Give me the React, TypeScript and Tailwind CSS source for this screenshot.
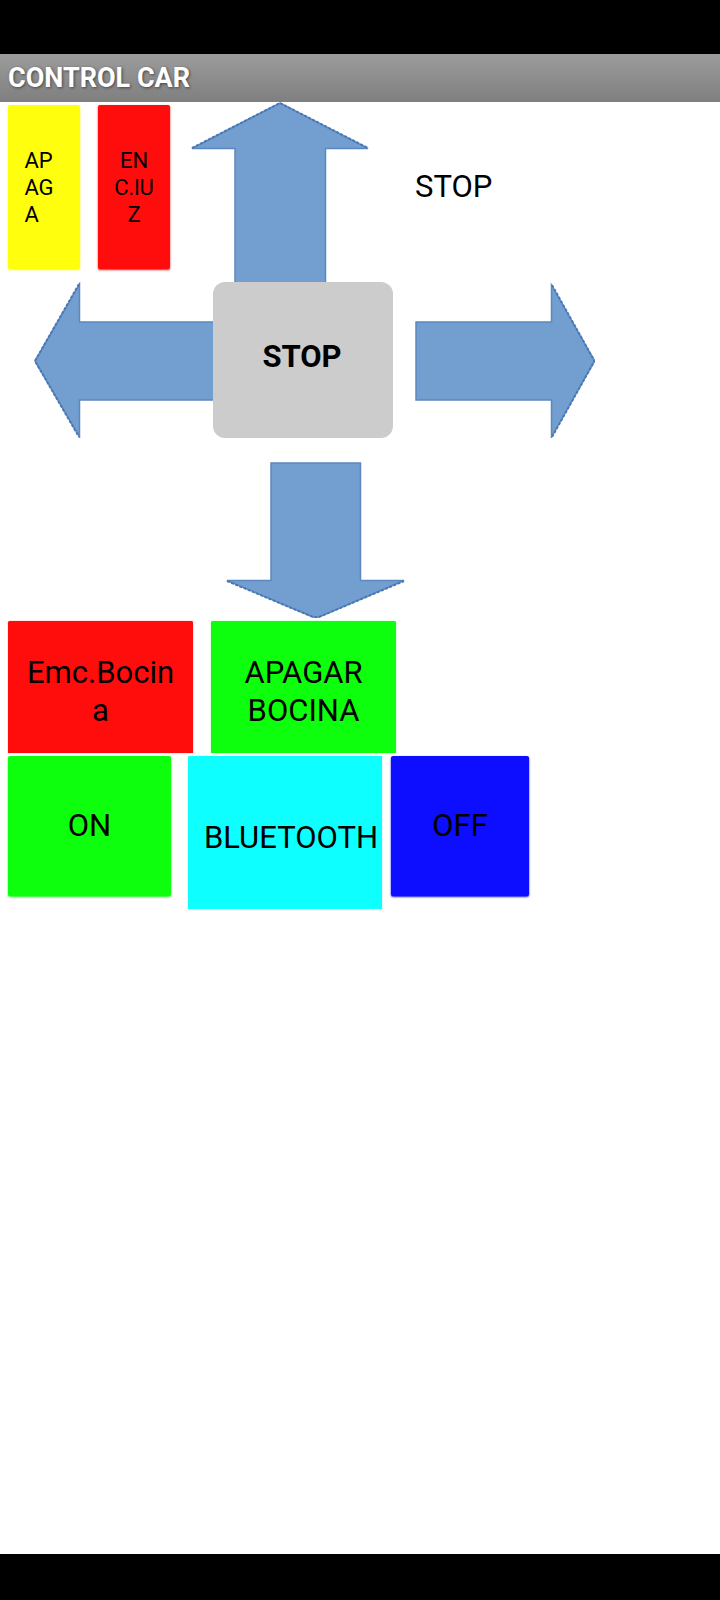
import type { ReactNode } from "react";

type ArrowProps = {
  label: string;
  viewBox: string;
  size: string;
  outline: string;
  tip: string;
};

function ArrowButton({ label, viewBox, size, outline, tip }: ArrowProps) {
  return (
    <button type="button" aria-label={label} className={`block shrink-0 ${size}`}>
      <svg viewBox={viewBox} className="block h-full w-full" fill="none">
        <path d={outline} fill="#729fcf" stroke="#5b88c0" strokeWidth="1.5" />
        <path d={tip} stroke="#4a78b5" strokeWidth="2" strokeDasharray="3 1.5" />
      </svg>
    </button>
  );
}

function ColorButton({ className, children }: { className: string; children: ReactNode }) {
  return (
    <button type="button" className={`flex shrink-0 items-center justify-center ${className}`}>
      <span>{children}</span>
    </button>
  );
}

export default function App() {
  return (
    <div className="flex min-h-screen flex-col bg-white font-[Roboto,sans-serif] text-black">
      <div className="h-[54px] bg-black" />
      <header className="flex h-12 items-center bg-linear-to-b from-[#9c9c9c] to-[#7f7f7f] px-2">
        <h1 className="text-[27px] leading-8 font-bold text-white [text-shadow:1px_1px_3px_#444]">
          CONTROL CAR
        </h1>
      </header>

      <main className="flex flex-1 flex-col items-start text-[31px] leading-[38px]">
        <div className="flex h-[180px] pl-2">
          <div className="flex gap-[18px] pt-[3px] text-[22px] leading-[27px]">
            <ColorButton className="h-[164px] w-[72px] rounded-xs bg-[#ffff0d] pr-2.5 text-left shadow-[0_1px_2px_#ffff0d]">
              AP
              <br />
              AG
              <br />A
            </ColorButton>
            <ColorButton className="h-[164px] w-[72px] rounded-xs bg-[#ff0d0d] shadow-[0_1px_2px_#ff0d0d]">
              EN
              <br />
              C.lU
              <br />Z
            </ColorButton>
          </div>
          <div className="pl-5">
            <ArrowButton
              label="Adelante"
              viewBox="0 0 180 180"
              size="h-[180px] w-[180px]"
              outline="M45 181V46.500H2L90 1L178 46.500H135.500V181"
              tip="M2 46L90 1L178 46"
            />
          </div>
          <p className="self-center pb-2.5 pl-[45px]">STOP</p>
        </div>

        <div className="flex h-[156px] pl-[33px]">
          <ArrowButton
            label="Izquierda"
            viewBox="0 0 180 156"
            size="h-[156px] w-[180px]"
            outline="M181 40H46.500V2L2 79L46.500 155V118H181"
            tip="M46 2L2 79L46 155"
          />
          <button
            type="button"
            className="w-[180px] shrink-0 rounded-xl bg-[#cccccc] pr-0.5 pb-1.5 font-bold"
          >
            STOP
          </button>
          <div className="pl-[22px]">
            <ArrowButton
              label="Derecha"
              viewBox="0 0 180 156"
              size="h-[156px] w-[180px]"
              outline="M1 40H136.500V3L179.500 79L136.500 155V118H1Z"
              tip="M137 3L179.500 79L137 155"
            />
          </div>
        </div>

        <div className="pt-6 pl-[225px]">
          <ArrowButton
            label="Atrás"
            viewBox="0 0 180 156"
            size="h-[156px] w-[180px]"
            outline="M46 1V118.500H2L88 155H94L179 118.500H135.500V1Z"
            tip="M2 119L88 155H94L179 119"
          />
        </div>

        <div className="flex h-[135px] gap-[18px] pt-[3px] pl-2">
          <ColorButton className="w-[185px] rounded-t-xs bg-[#ff0d0d] pt-2.5 shadow-[0_0_1px_#ff0d0d]">
            Emc.Bocin
            <br />a
          </ColorButton>
          <ColorButton className="w-[185px] rounded-t-xs bg-[#0dff0d] pt-2.5 shadow-[0_0_1px_#0dff0d]">
            APAGAR
            <br />
            BOCINA
          </ColorButton>
        </div>

        <div className="flex items-start pt-[3px] pl-2">
          <ColorButton className="h-[140px] w-[163px] rounded-xs bg-[#0dff0d] shadow-[0_1px_2px_#0dff0d]">
            ON
          </ColorButton>
          <div className="flex items-start gap-[9px] pl-[17px]">
            <ColorButton className="h-[153px] w-[194px] rounded-tl-xs bg-[#0dffff] pt-2.5 pl-3 shadow-[0_0_1px_#0dffff]">
              BLUETOOTH
            </ColorButton>
            <ColorButton className="h-[140px] w-[138px] rounded-xs bg-[#0d0dff] shadow-[0_1px_2px_#0d0dff]">
              OFF
            </ColorButton>
          </div>
        </div>
      </main>

      <div className="h-[46px] bg-black" />
    </div>
  );
}
